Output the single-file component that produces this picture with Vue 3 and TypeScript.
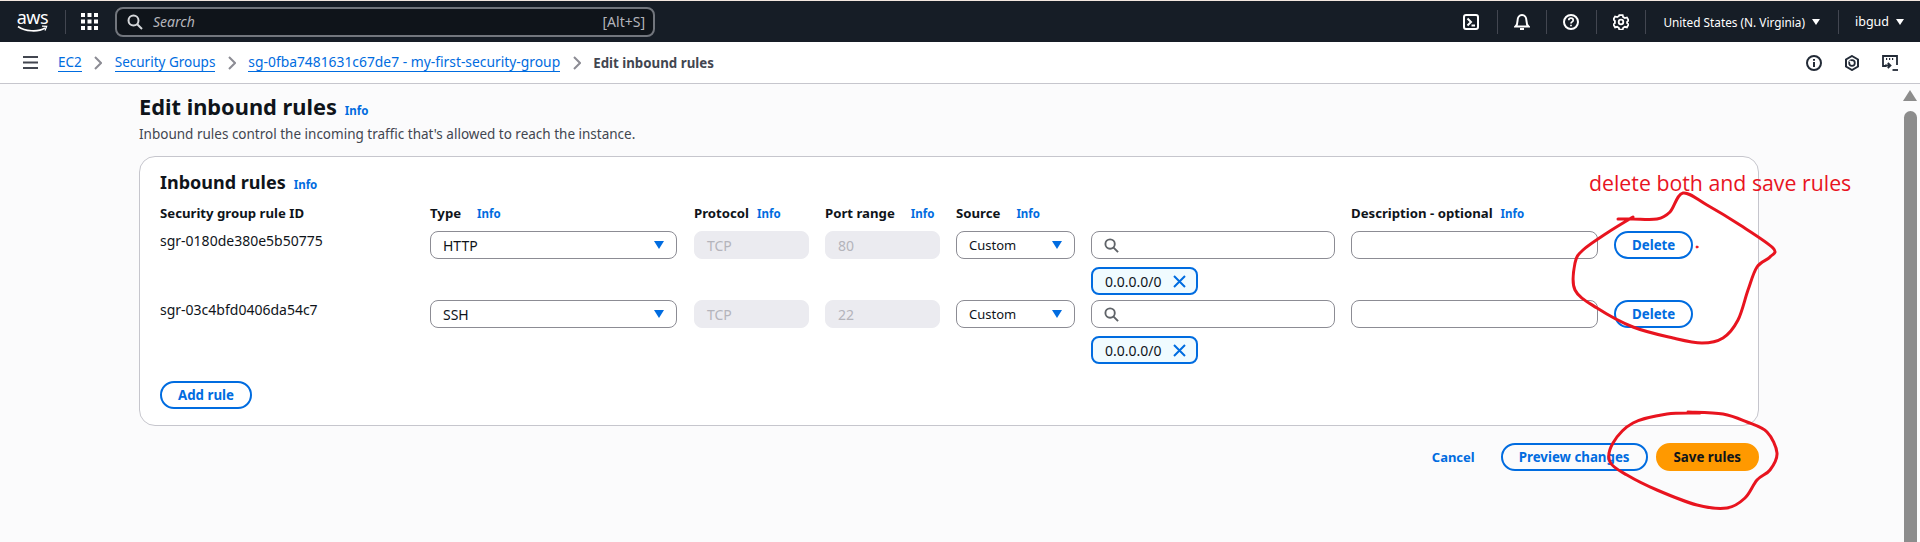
<script setup lang="ts">
interface Rule {
  id: string;
  type: string;
  port: string;
}

type Point = [number, number];

const rules: Rule[] = [
  { id: "sgr-0180de380e5b50775", type: "HTTP", port: "80" },
  { id: "sgr-03c4bfd0406da54c7", type: "SSH", port: "22" },
];

const deleteLoop: Point[] = [
  [1618, 219], [1633, 219], [1657, 219], [1670, 212], [1683, 193], [1707, 205],
  [1740, 225], [1773, 248], [1770, 257], [1757, 267], [1748, 290], [1738, 320],
  [1723, 338], [1702, 343], [1673, 338], [1633, 327], [1597, 308], [1575, 290],
  [1575, 263], [1583, 250], [1607, 233], [1633, 217],
];

const saveLoop: Point[] = [
  [1688, 412], [1723, 414], [1747, 422], [1767, 432], [1777, 453], [1770, 470],
  [1757, 480], [1745, 498], [1727, 508], [1697, 505], [1657, 490], [1627, 475],
  [1610, 462], [1613, 443], [1633, 423], [1667, 414], [1700, 413],
];

// catmull-rom through the points, so the scribbles stay round
const smooth = (pts: Point[]): string => {
  let d = `M${pts[0][0]} ${pts[0][1]}`;
  for (let i = 0; i < pts.length - 1; i++) {
    const p0 = pts[i - 1] ?? pts[i];
    const p1 = pts[i];
    const p2 = pts[i + 1];
    const p3 = pts[i + 2] ?? p2;
    const c1x = p1[0] + (p2[0] - p0[0]) / 6;
    const c1y = p1[1] + (p2[1] - p0[1]) / 6;
    const c2x = p2[0] - (p3[0] - p1[0]) / 6;
    const c2y = p2[1] - (p3[1] - p1[1]) / 6;
    d += ` C${c1x} ${c1y} ${c2x} ${c2y} ${p2[0]} ${p2[1]}`;
  }
  return d;
};
</script>

<template>
  <div class="console">
    <header class="topbar">
      <div class="aws-logo">
        <span class="aws-word">aws</span>
        <svg class="aws-smile" width="31" height="8" viewBox="0 0 31 8" fill="none" stroke="#fff" stroke-width="1.6">
          <path d="M1 1.5C8 6.5 21 7.5 28 3" />
          <path d="M25 1.2 29.6 1.4 28 5.6" stroke-width="1.3" />
        </svg>
      </div>
      <span class="top-divider logo-divider"></span>
      <svg class="apps" width="17" height="17" viewBox="0 0 17 17" fill="#fff">
        <rect x="0" y="0" width="4" height="4" /><rect x="6.5" y="0" width="4" height="4" /><rect x="13" y="0" width="4" height="4" />
        <rect x="0" y="6.5" width="4" height="4" /><rect x="6.5" y="6.5" width="4" height="4" /><rect x="13" y="6.5" width="4" height="4" />
        <rect x="0" y="13" width="4" height="4" /><rect x="6.5" y="13" width="4" height="4" /><rect x="13" y="13" width="4" height="4" />
      </svg>
      <div class="global-search">
        <svg width="16" height="16" viewBox="0 0 16 16" fill="none" stroke="#d5d7da" stroke-width="2">
          <circle cx="6.5" cy="6.5" r="5" /><path d="M10.2 10.2 15 15" />
        </svg>
        <span class="search-word">Search</span>
        <span class="shortcut">[Alt+S]</span>
      </div>
      <div class="top-right">
        <span class="top-icon">
          <svg width="16" height="16" viewBox="0 0 16 16" fill="none" stroke="#fff" stroke-width="2">
            <rect x="1" y="1" width="14" height="14" rx="2" /><path d="M4.5 4.5 8 8l-3.5 3.5M8.5 11.5H12" />
          </svg>
        </span>
        <span class="top-icon divided">
          <svg width="16" height="16" viewBox="0 0 16 16" fill="none" stroke="#fff" stroke-width="2">
            <path d="M1.5 12.5h13c-1.500-1.500-2-3-2-5.500C12.500 3.500 10.500 1 8 1S3.500 3.500 3.500 7c0 2.500-.5 4-2 5.500Z" /><path d="M6 15h4" />
          </svg>
        </span>
        <span class="top-icon divided">
          <svg width="16" height="16" viewBox="0 0 16 16" fill="none" stroke="#fff" stroke-width="2">
            <circle cx="8" cy="8" r="7" /><path d="M5.800 6.200C5.800 5 6.800 4.200 8 4.200s2.200.8 2.200 2c0 1.700-2.200 1.700-2.200 3.300" stroke-width="1.700" /><path d="M8 10.800v1.500" stroke-width="1.700" />
          </svg>
        </span>
        <span class="top-icon divided">
          <svg width="16" height="16" viewBox="0 0 16 16" fill="none" stroke="#fff" stroke-width="1.800">
            <path d="M6.300 1h3.400l.5 2 1.700 1 2-.6 1.700 3-1.500 1.400v1.400l1.500 1.400-1.700 3-2-.6-1.700 1-.5 2H6.300l-.5-2-1.700-1-2 .6-1.700-3 1.500-1.400V6.800L.4 5.400l1.700-3 2 .6 1.700-1Z" transform="translate(0 .2) scale(1 .97)" /><circle cx="8" cy="8" r="2.300" />
          </svg>
        </span>
        <span class="top-menu divided region">United States (N. Virginia)<i class="top-caret"></i></span>
        <span class="top-menu divided user">ibgud<i class="top-caret"></i></span>
      </div>
    </header>

    <nav class="crumbbar">
      <svg class="menu-icon" width="15" height="13" viewBox="0 0 15 13" fill="#424650">
        <rect width="15" height="2" /><rect y="5.500" width="15" height="2" /><rect y="11" width="15" height="2" />
      </svg>
      <a class="crumb">EC2</a>
      <svg class="chev" width="8" height="14" viewBox="0 0 8 14" fill="none" stroke="#8c8c94" stroke-width="2"><path d="M1 1l6 6-6 6" /></svg>
      <a class="crumb">Security Groups</a>
      <svg class="chev" width="8" height="14" viewBox="0 0 8 14" fill="none" stroke="#8c8c94" stroke-width="2"><path d="M1 1l6 6-6 6" /></svg>
      <a class="crumb crumb-long">sg-0fba7481631c67de7 - my-first-security-group</a>
      <svg class="chev" width="8" height="14" viewBox="0 0 8 14" fill="none" stroke="#8c8c94" stroke-width="2"><path d="M1 1l6 6-6 6" /></svg>
      <span class="crumb-current">Edit inbound rules</span>
      <div class="crumb-tools">
        <svg width="16" height="16" viewBox="0 0 16 16" fill="none" stroke="#232b37" stroke-width="2">
          <circle cx="8" cy="8" r="7" /><path d="M8 7v5M8 4v1.800" />
        </svg>
        <svg width="16" height="16" viewBox="0 0 16 16" fill="none" stroke="#232b37" stroke-width="2">
          <path d="M8 1l6 3.500v7L8 15l-6-3.500v-7Z" /><circle cx="8" cy="8" r="2.800" stroke-width="1.800" /><path d="M8 8 5.500 5.800" stroke="#fff" stroke-width="1.400" />
        </svg>
        <svg width="16" height="16" viewBox="0 0 16 16" fill="none" stroke="#232b37" stroke-width="1.800">
          <path d="M4.500 11H1V1h14v9" /><path d="M4 4h1.200M7 4h1.200M10 4h1.200" /><path d="M3 10.500h5M5.800 7.800l2.700 2.700-2.700 2.700" /><path d="M10.500 15H16" />
        </svg>
      </div>
    </nav>

    <div class="workspace">
      <main class="page">
        <div class="page-head">
          <h1>Edit inbound rules</h1>
          <a class="info">Info</a>
        </div>
        <p class="page-desc">Inbound rules control the incoming traffic that's allowed to reach the instance.</p>

        <section class="card">
          <div class="card-head">
            <h2>Inbound rules</h2>
            <a class="info">Info</a>
          </div>

          <div class="rule-grid labels">
            <span class="col-label">Security group rule ID</span>
            <span class="col-label wide">Type<a class="info">Info</a></span>
            <span class="col-label">Protocol<a class="info">Info</a></span>
            <span class="col-label wide">Port range<a class="info">Info</a></span>
            <span class="col-label wide">Source<a class="info">Info</a></span>
            <span></span>
            <span class="col-label">Description - optional<a class="info">Info</a></span>
            <span></span>
          </div>

          <div v-for="rule in rules" :key="rule.id" class="rule-grid rule-row">
            <span class="rule-id">{{ rule.id }}</span>
            <div class="field select type-select">{{ rule.type }}<i class="caret"></i></div>
            <div class="field disabled">TCP</div>
            <div class="field disabled">{{ rule.port }}</div>
            <div class="field select source-select">Custom<i class="caret"></i></div>
            <div class="source-cell">
              <div class="field search-field">
                <svg width="15" height="15" viewBox="0 0 16 16" fill="none" stroke="#5f6368" stroke-width="2">
                  <circle cx="6.500" cy="6.500" r="5" /><path d="M10.200 10.200 15 15" />
                </svg>
              </div>
              <div class="token">
                <span>0.0.0.0/0</span>
                <svg width="13" height="13" viewBox="0 0 13 13" fill="none" stroke="#006ce0" stroke-width="2"><path d="M1 1l11 11M12 1 1 12" /></svg>
              </div>
            </div>
            <div class="field"></div>
            <button class="btn">Delete</button>
          </div>

          <button class="btn add-rule">Add rule</button>
        </section>

        <div class="actions">
          <a class="cancel">Cancel</a>
          <button class="btn preview">Preview changes</button>
          <button class="btn primary">Save rules</button>
        </div>
      </main>

      <aside class="scrollbar">
        <i class="scroll-arrow"></i>
        <i class="scroll-thumb"></i>
      </aside>
    </div>

    <!-- hand-drawn markup on top of the screenshot -->
    <svg class="scribbles" width="1920" height="542" viewBox="0 0 1920 542" fill="none" stroke="#e8141f" stroke-width="3" stroke-linecap="round">
      <path :d="smooth(deleteLoop)" />
      <path :d="smooth(saveLoop)" />
      <circle cx="1697" cy="247" r="1" fill="#e8141f" stroke-width="1" />
    </svg>
    <span class="note">delete both and save rules</span>
  </div>
</template>

<style scoped>
.console {
  position: relative;
  width: 1920px;
  height: 542px;
  overflow: hidden;
  display: flex;
  flex-direction: column;
  background: #fbfbfc;
  color: #0f141a;
  font-family: "Noto Sans", "Open Sans", sans-serif;
  font-size: 14px;
}

.topbar {
  flex: none;
  height: 42px;
  box-sizing: border-box;
  border-top: 1px solid #f3e7df;
  background: #161d26;
  display: flex;
  align-items: center;
  padding-left: 17px;
  color: #fff;
}

.aws-logo {
  width: 31px;
  display: flex;
  flex-direction: column;
  align-items: center;
  line-height: 13px;
}

.aws-word {
  font-size: 18px;
  letter-spacing: -0.4px;
}

.aws-smile {
  margin-top: 1px;
}

.top-divider {
  width: 1px;
  height: 24px;
  background: #424650;
}

.logo-divider {
  margin: 0 15px 0 17px;
}

.apps {
  flex: none;
}

.global-search {
  width: 540px;
  height: 30px;
  box-sizing: border-box;
  margin-left: 17px;
  padding: 0 8px 0 10px;
  border: 2px solid #72767d;
  border-radius: 8px;
  background: #0f141a;
  display: flex;
  align-items: center;
  color: #b4b4bb;
}

.search-word {
  margin-left: 10px;
  font-style: italic;
}

.shortcut {
  margin-left: auto;
}

.top-right {
  margin-left: auto;
  display: flex;
  align-items: center;
  height: 24px;
  padding-right: 16px;
}

.top-icon {
  width: 49.500px;
  height: 24px;
  box-sizing: border-box;
  padding-left: 16px;
  display: flex;
  align-items: center;
}

.divided {
  border-left: 1px solid #424650;
}

.top-menu {
  display: flex;
  align-items: center;
  height: 24px;
  color: #fff;
}

.region {
  padding: 0 18px 0 17px;
  font-size: 11.800px;
}

.user {
  padding-left: 16px;
  font-size: 12.500px;
}

.top-caret {
  width: 0;
  height: 0;
  margin-left: 7px;
  border-left: 4px solid transparent;
  border-right: 4px solid transparent;
  border-top: 6px solid #fff;
}

.crumbbar {
  flex: none;
  height: 42px;
  box-sizing: border-box;
  border-bottom: 1px solid #c6c6cd;
  background: #fff;
  display: flex;
  align-items: center;
  padding: 0 22px 0 23px;
}

.menu-icon {
  margin-right: 20px;
}

.crumb {
  color: #006ce0;
  border-bottom: 1px solid #006ce0;
  line-height: 18px;
  font-size: 13.500px;
}

.crumb-long {
  font-size: 13.850px;
}

.chev {
  margin: 0 12.500px;
}

.crumb-current {
  font-size: 13.300px;
  font-weight: 700;
  color: #424650;
}

.crumb-tools {
  margin-left: auto;
  display: flex;
  gap: 22px;
}

.workspace {
  flex: 1;
  display: flex;
  min-height: 0;
}

.page {
  flex: 1;
  padding: 8px 0 0 139px;
}

.page-head,
.card-head {
  display: flex;
  align-items: baseline;
  gap: 8px;
}

h1 {
  margin: 0;
  font-size: 21.800px;
  line-height: 30px;
  font-weight: 700;
}

h2 {
  margin: 0;
  font-size: 18px;
  line-height: 24px;
  font-weight: 700;
}

.info {
  color: #006ce0;
  font-size: 11.500px;
  font-weight: 700;
}

.page-desc {
  margin: 2px 0 12px;
  line-height: 20px;
  font-size: 13.500px;
  color: #424650;
}

.card {
  width: 1620px;
  height: 270px;
  box-sizing: border-box;
  padding: 13px 0 0 20px;
  border: 1px solid #c6c6cd;
  border-radius: 16px;
  background: #fff;
}

.rule-grid {
  display: grid;
  grid-template-columns: 254px 248px 115px 115px 119px 244px 247px 79px;
  column-gap: 16px;
}

.labels {
  margin-top: 9px;
  margin-bottom: 7px;
  line-height: 20px;
}

.col-label {
  display: flex;
  align-items: baseline;
  gap: 8px;
  font-size: 13.200px;
  font-weight: 700;
  white-space: nowrap;
}

.col-label.wide {
  gap: 16px;
}

.rule-row {
  height: 69px;
  align-items: start;
}

.rule-id {
  line-height: 20px;
  color: #0f141a;
}

.field {
  height: 28px;
  box-sizing: border-box;
  padding: 0 12px;
  border: 1px solid #8c8c94;
  border-radius: 8px;
  background: #fff;
  display: flex;
  align-items: center;
}

.select {
  justify-content: space-between;
}

.type-select {
  width: 247px;
}

.source-select {
  font-size: 13px;
}

.disabled {
  border-color: #ebebf0;
  background: #ebebf0;
  color: #b4b4bb;
}

.caret {
  width: 0;
  height: 0;
  border-left: 5px solid transparent;
  border-right: 5px solid transparent;
  border-top: 8px solid #006ce0;
}

.source-cell {
  display: flex;
  flex-direction: column;
  align-items: flex-start;
  gap: 8px;
}

.source-cell .field {
  width: 100%;
}

.token {
  width: 107px;
  height: 28px;
  box-sizing: border-box;
  padding: 0 10px 0 12px;
  border: 2px solid #006ce0;
  border-radius: 8px;
  background: #f0fbff;
  display: flex;
  align-items: center;
  justify-content: space-between;
}

.btn {
  height: 28px;
  box-sizing: border-box;
  padding: 0 16px;
  border: 2px solid #006ce0;
  border-radius: 14px;
  background: #fff;
  color: #006ce0;
  font: 700 13.300px "Noto Sans", "Open Sans", sans-serif;
  white-space: nowrap;
}

.add-rule {
  display: block;
  margin-top: 12px;
}

.actions {
  width: 1620px;
  margin-top: 17px;
  display: flex;
  justify-content: flex-end;
  align-items: center;
  gap: 8px;
}

.cancel {
  margin-right: 18px;
  color: #006ce0;
  font-size: 13px;
  font-weight: 700;
}

.preview {
  background: transparent;
}

.primary {
  border-color: #ff9900;
  background: #ff9900;
  color: #0f141a;
}

.scrollbar {
  flex: none;
  width: 20px;
  display: flex;
  flex-direction: column;
  align-items: center;
  padding-top: 6px;
  box-sizing: border-box;
}

.scroll-arrow {
  width: 0;
  height: 0;
  border-left: 7px solid transparent;
  border-right: 7px solid transparent;
  border-bottom: 11px solid #8c8c8c;
}

.scroll-thumb {
  flex: 1;
  width: 13px;
  margin-top: 10px;
  border-radius: 7px 7px 0 0;
  background: #8c8c8c;
}

.scribbles {
  position: absolute;
  left: 0;
  top: 0;
  pointer-events: none;
}

.note {
  position: absolute;
  left: 1589px;
  top: 169px;
  font-family: "Open Sans", sans-serif;
  font-size: 21.300px;
  line-height: 28px;
  color: #e8141f;
  white-space: nowrap;
}
</style>

<style>
html,
body {
  overflow: hidden;
}
</style>
